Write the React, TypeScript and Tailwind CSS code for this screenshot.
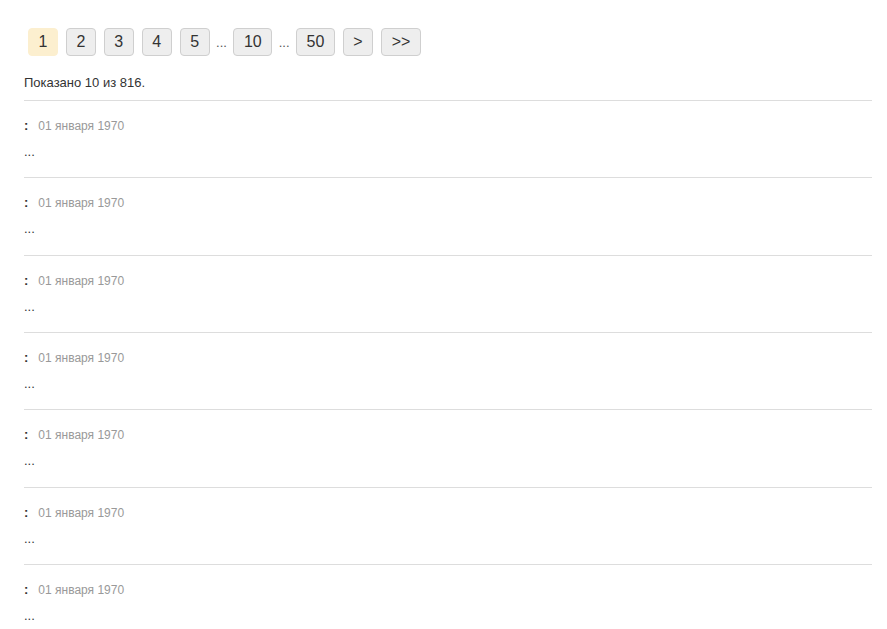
import React from "react";

const pages = ["1", "2", "3", "4", "5", "...", "10", "...", "50", ">", ">>"];

export default function App() {
  return (
    <div
      className="bg-white min-h-screen pl-[24px] pr-[15px] pt-[27px] text-[#333]"
      style={{ fontFamily: '"Liberation Sans", Arial, sans-serif' }}
    >
      <div className="flex items-center gap-2 pl-[4px]">
        {pages.map((p, i) =>
          p === "..." ? (
            <span key={i} className="text-[13px] leading-[28px] text-[#555] -mx-[1.5px] pt-[2px]">
              ...
            </span>
          ) : (
            <span
              key={i}
              className={
                "h-[28px] px-[9.5px] rounded-[4px] border text-[16px] leading-[26px] flex items-center justify-center " +
                (i === 0
                  ? "bg-[#fcefcf] border-[#fcefcf] text-[#333]"
                  : "bg-[#eeeeee] border-[#cfcfcf] text-[#333]")
              }
            >
              {p}
            </span>
          )
        )}
      </div>
      <div className="text-[13px] leading-[18px] mt-[17px] h-[26px]">Показано 10 из 816.</div>
      <div>
        {Array.from({ length: 7 }).map((_, i) => (
          <div key={i} className="border-t border-[#dddddd] h-[77.33px] pt-[16px]">
            <div className="leading-[18px] flex items-baseline">
              <span className="font-bold text-[13px] mr-[10px]">:</span>
              <span className="text-[12px] text-[#999]">01 января 1970</span>
            </div>
            <div className="text-[13px] leading-[18px] mt-[8px]">...</div>
          </div>
        ))}
      </div>
    </div>
  );
}
